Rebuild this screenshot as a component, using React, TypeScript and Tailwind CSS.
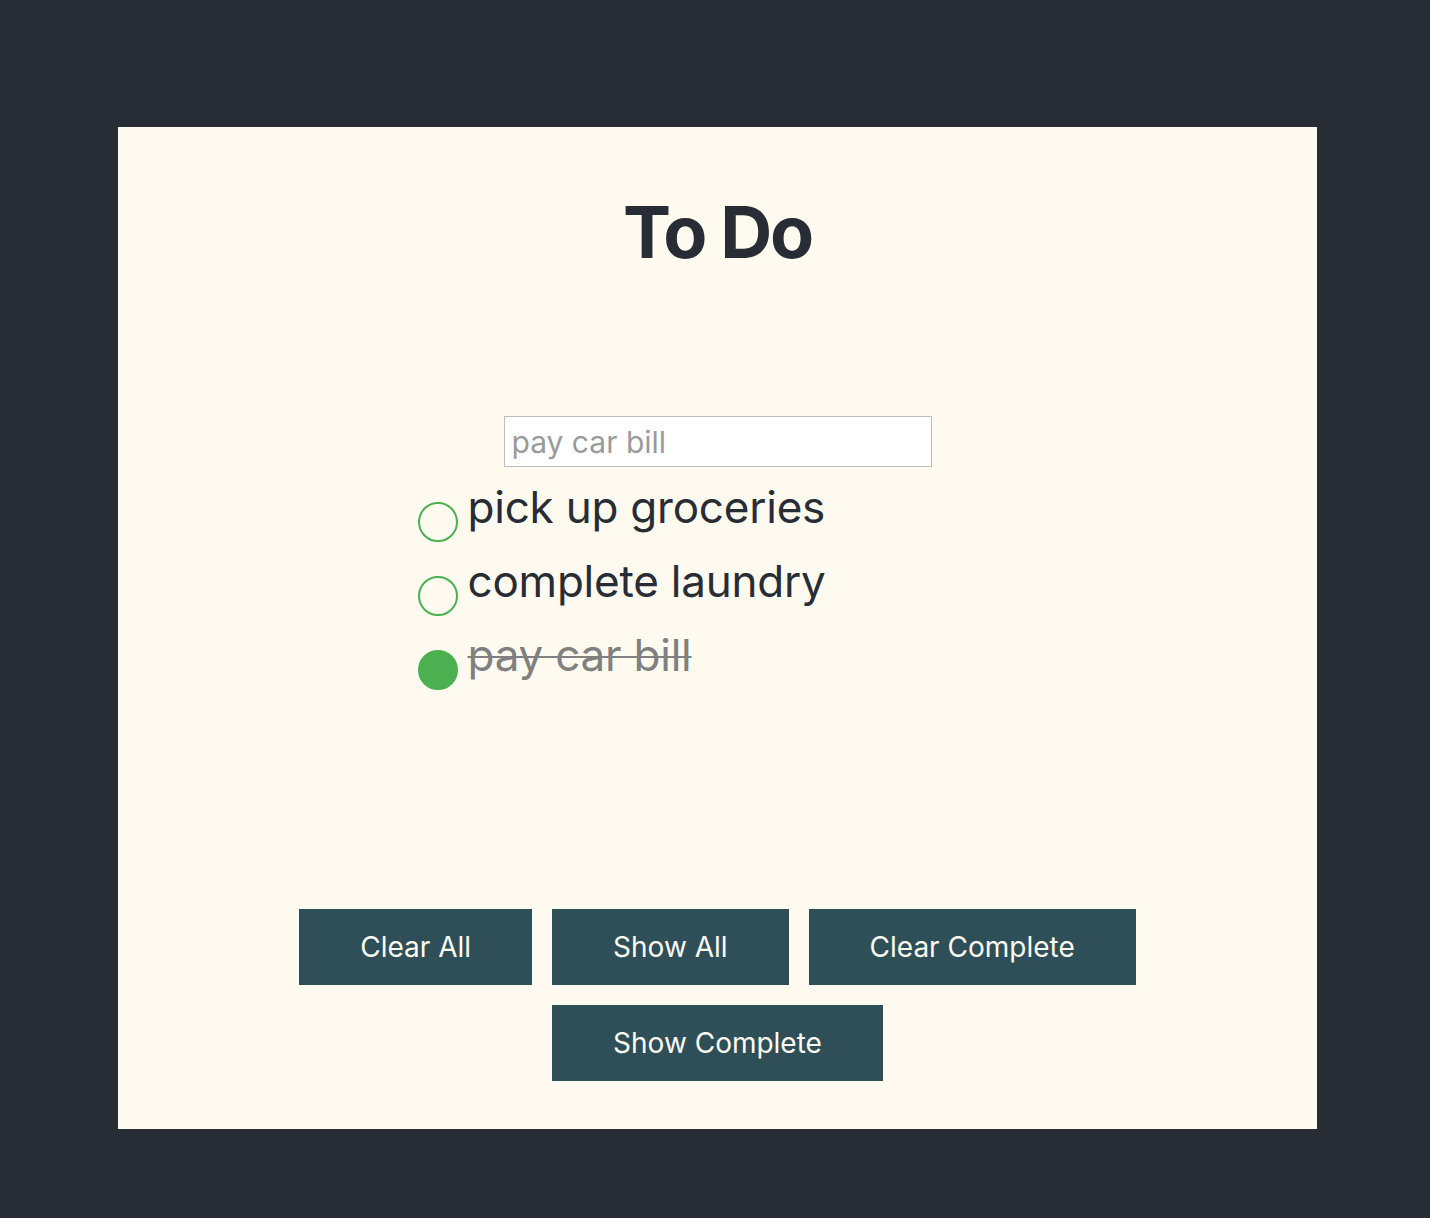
import { useState } from "react";

type Todo = {
  id: number;
  text: string;
  done: boolean;
};

const initialTodos: Todo[] = [
  { id: 1, text: "pick up groceries", done: false },
  { id: 2, text: "complete laundry", done: false },
  { id: 3, text: "pay car bill", done: true },
];

const buttons = ["Clear All", "Show All", "Clear Complete", "Show Complete"];

const App = () => {
  const [todos, setTodos] = useState<Todo[]>(initialTodos);

  const toggle = (id: number) =>
    setTodos(todos.map((t) => (t.id === id ? { ...t, done: !t.done } : t)));

  return (
    <div
      className="min-h-[1218px] bg-[#282c34] pt-[127px] pb-[89px]"
      style={{ fontFamily: "Inter, 'Noto Sans', sans-serif" }}
    >
      <div className="ml-[118px] w-[1199px] bg-[#fffaf0] pt-[69px] pb-[48px]">
        <h1 className="text-center text-7xl font-bold leading-none tracking-[-0.03em] text-[#282c34]">
          To Do
        </h1>

        <div className="mt-[148px] flex justify-center">
          <input
            type="text"
            placeholder="pay car bill"
            className="h-[51px] w-[428px] border border-[#bdbdbd] bg-white px-[7px] text-[30px] text-[#282c34] outline-none placeholder:text-[#9a9a9a]"
          />
        </div>

        {/* List */}
        <ul className="mx-auto mt-[3px] w-[600px]">
          {todos.map((todo) => (
            <li key={todo.id} className="flex h-[74px] items-start gap-[10px]">
              <button
                type="button"
                onClick={() => toggle(todo.id)}
                className={
                  todo.done
                    ? "mt-[32px] h-10 w-10 shrink-0 rounded-full border-2 border-[#4caf50] bg-[#4caf50]"
                    : "mt-[32px] h-10 w-10 shrink-0 rounded-full border-2 border-[#4caf50] bg-transparent"
                }
              />
              <span
                className={
                  todo.done
                    ? "text-[44px] leading-[74px] tracking-[-0.005em] text-[#808080] line-through decoration-2"
                    : "text-[44px] leading-[74px] tracking-[-0.005em] text-[#282c34]"
                }
              >
                {todo.text}
              </span>
            </li>
          ))}
        </ul>

        <div className="mx-auto mt-[217px] flex max-w-[1100px] flex-wrap justify-center gap-5">
          {buttons.map((label) => (
            <button
              key={label}
              type="button"
              className="h-[76px] bg-[#2e4f57] px-[61px] text-[28px] text-[#fffaf0]"
            >
              {label}
            </button>
          ))}
        </div>
      </div>
    </div>
  );
};

export default App;
